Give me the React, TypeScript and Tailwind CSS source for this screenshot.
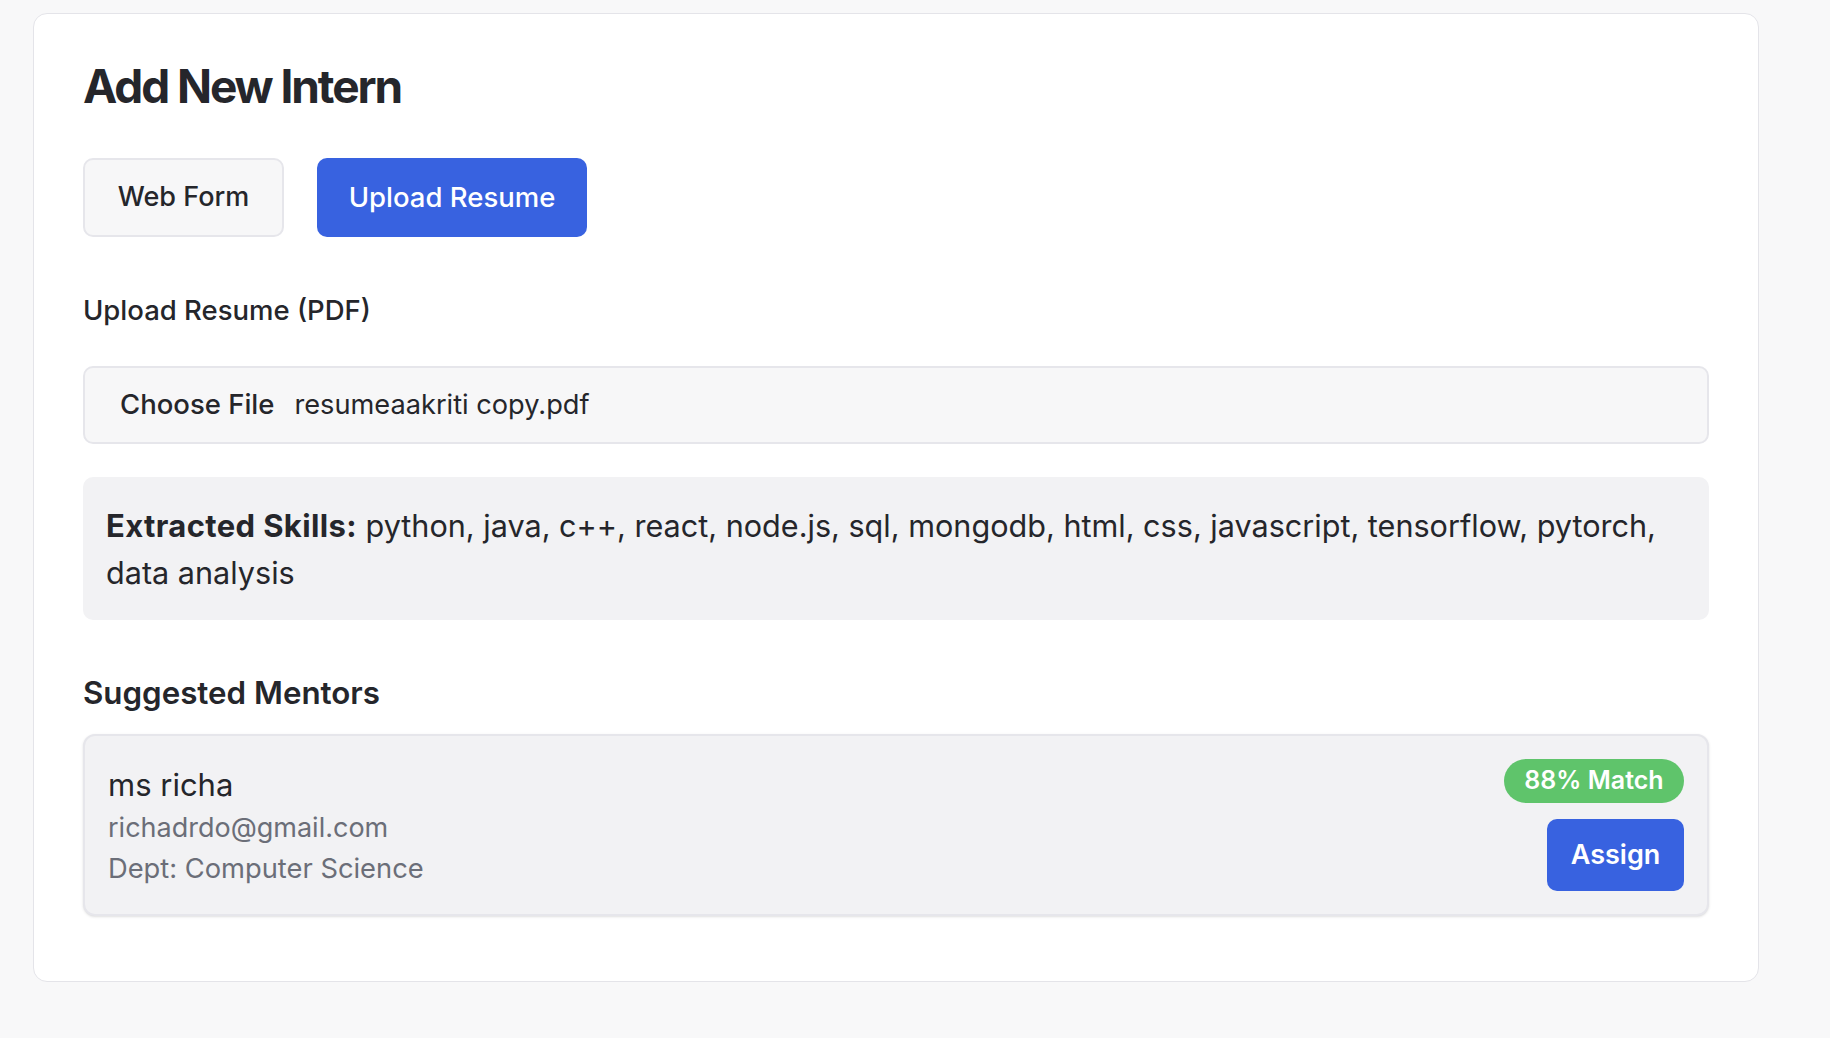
import React, { useState } from 'react'

const skills = ['python', 'java', 'c++', 'react', 'node.js', 'sql', 'mongodb', 'html', 'css', 'javascript', 'tensorflow', 'pytorch', 'data\u00a0analysis']

const App = () => {
    const [mode, setMode] = useState('resume')
    return (
        <div className="min-h-[1038px] bg-[#f8f8f9] pt-[13px] pl-[33px] font-['Inter',sans-serif] text-[#25262b]">
            <div className="w-[1726px] rounded-[14px] border border-[#e4e4e9] bg-white px-[49px] pt-[44px] pb-[65px]">
                <h1 className="text-[46px] font-bold leading-[57px] tracking-[-0.045em]">Add New Intern</h1>

                <div className="mt-[43px] flex gap-[33px]">
                    <button
                        onClick={() => setMode('web')}
                        className={mode === 'web'
                            ? 'h-[79px] w-[201px] rounded-[10px] bg-[#3862e0] text-[27px] font-medium text-white'
                            : 'h-[79px] w-[201px] rounded-[10px] border-2 border-[#e6e6eb] bg-[#f7f7f8] text-[27px] font-medium'}
                    >
                        Web Form
                    </button>
                    <button
                        onClick={() => setMode('resume')}
                        className={mode === 'resume'
                            ? 'h-[79px] w-[270px] rounded-[10px] bg-[#3862e0] text-[27.5px] font-medium text-white'
                            : 'h-[79px] w-[270px] rounded-[10px] border-2 border-[#e6e6eb] bg-[#f7f7f8] text-[27.5px] font-medium'}
                    >
                        Upload Resume
                    </button>
                </div>

                <div className="mt-[57px] text-[27.5px] font-medium leading-[33px]">Upload Resume (PDF)</div>

                <div className="mt-[39px] flex h-[78px] items-center gap-[20px] rounded-[10px] border-2 border-[#e6e6eb] bg-[#f7f7f8] pl-[35px] text-[27.5px]">
                    <span className="font-medium">Choose File</span>
                    <span className="text-[27.2px]">resumeaakriti copy.pdf</span>
                </div>

                <div className="mt-[33px] rounded-[10px] bg-[#f2f2f4] px-[23px] pt-[25px] pb-[24px] text-[30.6px] leading-[47px]">
                    <span className="text-[31px] font-bold tracking-[0.012em]">Extracted Skills:</span> {skills.join(', ')}
                </div>

                <h2 className="mt-[55px] text-[31.3px] font-semibold leading-[36px]">Suggested Mentors</h2>

                <div className="mt-[23px] flex items-start justify-between rounded-[12px] border-2 border-[#e6e6eb] bg-[#f2f2f4] p-[23px] shadow-sm">
                    <div className="pt-[5px]">
                        <div className="text-[31px] leading-[42px]">ms richa</div>
                        <div className="text-[27px] leading-[43px] text-[#6b6e78]">richadrdo@gmail.com</div>
                        <div className="text-[27.3px] leading-[40px] text-[#6b6e78]">Dept: Computer Science</div>
                    </div>
                    <div className="flex flex-col items-end gap-[16px]">
                        <span className="flex h-[44px] w-[180px] items-center justify-center rounded-full bg-[#5fc46b] text-[25px] font-semibold text-white">
                            88% Match
                        </span>
                        <button className="h-[72px] w-[137px] rounded-[10px] bg-[#3862e0] text-[27px] font-semibold text-white">
                            Assign
                        </button>
                    </div>
                </div>
            </div>
        </div>
    )
}

export default App
